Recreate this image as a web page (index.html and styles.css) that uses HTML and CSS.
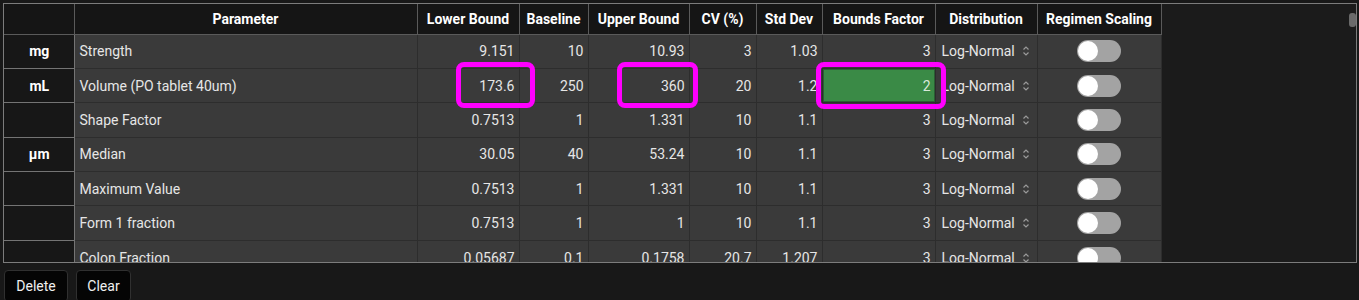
FILE: index.html
```html
<!DOCTYPE html>
<html>
<head>
<meta charset="utf-8">
<link rel="stylesheet" href="styles.css">
</head>
<body>
<div class="page">
  <div class="grid-box">
    <table class="grid">
      <colgroup>
        <col class="c-unit"><col class="c-param"><col class="c-lower"><col class="c-base"><col class="c-upper"><col class="c-cv"><col class="c-std"><col class="c-bf"><col class="c-dist"><col class="c-reg">
      </colgroup>
      <thead>
        <tr>
          <th class="unit"></th>
          <th>Parameter</th>
          <th>Lower Bound</th>
          <th>Baseline</th>
          <th>Upper Bound</th>
          <th>CV (%)</th>
          <th>Std Dev</th>
          <th>Bounds Factor</th>
          <th>Distribution</th>
          <th>Regimen Scaling</th>
        </tr>
      </thead>
      <tbody>
        <tr>
          <td class="unit">mg</td><td class="name">Strength</td><td class="num">9.151</td><td class="num">10</td><td class="num">10.93</td><td class="num">3</td><td class="num">1.03</td><td class="num">3</td>
          <td class="dist"><span class="sel">Log-Normal<svg class="arr" viewBox="0 0 8 12" width="8" height="12"><path d="M1.5 4.5 L4 2 L6.5 4.5 M1.5 7.5 L4 10 L6.5 7.5" fill="none" stroke="#9a9a9a" stroke-width="1.2"/></svg></span></td>
          <td class="reg"><span class="toggle"><span class="knob"></span></span></td>
        </tr>
        <tr>
          <td class="unit">mL</td><td class="name">Volume (PO tablet 40um)</td><td class="num mark"><span class="ring r-lower"></span>173.6</td><td class="num">250</td><td class="num mark"><span class="ring r-upper"></span>360</td><td class="num">20</td><td class="num">1.2</td><td class="num green mark"><span class="ring r-bf"></span>2</td>
          <td class="dist"><span class="sel">Log-Normal<svg class="arr" viewBox="0 0 8 12" width="8" height="12"><path d="M1.5 4.5 L4 2 L6.5 4.5 M1.5 7.5 L4 10 L6.5 7.5" fill="none" stroke="#9a9a9a" stroke-width="1.2"/></svg></span></td>
          <td class="reg"><span class="toggle"><span class="knob"></span></span></td>
        </tr>
        <tr>
          <td class="unit"></td><td class="name">Shape Factor</td><td class="num">0.7513</td><td class="num">1</td><td class="num">1.331</td><td class="num">10</td><td class="num">1.1</td><td class="num">3</td>
          <td class="dist"><span class="sel">Log-Normal<svg class="arr" viewBox="0 0 8 12" width="8" height="12"><path d="M1.5 4.5 L4 2 L6.5 4.5 M1.5 7.5 L4 10 L6.5 7.5" fill="none" stroke="#9a9a9a" stroke-width="1.2"/></svg></span></td>
          <td class="reg"><span class="toggle"><span class="knob"></span></span></td>
        </tr>
        <tr>
          <td class="unit">µm</td><td class="name">Median</td><td class="num">30.05</td><td class="num">40</td><td class="num">53.24</td><td class="num">10</td><td class="num">1.1</td><td class="num">3</td>
          <td class="dist"><span class="sel">Log-Normal<svg class="arr" viewBox="0 0 8 12" width="8" height="12"><path d="M1.5 4.5 L4 2 L6.5 4.5 M1.5 7.5 L4 10 L6.5 7.5" fill="none" stroke="#9a9a9a" stroke-width="1.2"/></svg></span></td>
          <td class="reg"><span class="toggle"><span class="knob"></span></span></td>
        </tr>
        <tr>
          <td class="unit"></td><td class="name">Maximum Value</td><td class="num">0.7513</td><td class="num">1</td><td class="num">1.331</td><td class="num">10</td><td class="num">1.1</td><td class="num">3</td>
          <td class="dist"><span class="sel">Log-Normal<svg class="arr" viewBox="0 0 8 12" width="8" height="12"><path d="M1.5 4.5 L4 2 L6.5 4.5 M1.5 7.5 L4 10 L6.5 7.5" fill="none" stroke="#9a9a9a" stroke-width="1.2"/></svg></span></td>
          <td class="reg"><span class="toggle"><span class="knob"></span></span></td>
        </tr>
        <tr>
          <td class="unit"></td><td class="name">Form 1 fraction</td><td class="num">0.7513</td><td class="num">1</td><td class="num">1</td><td class="num">10</td><td class="num">1.1</td><td class="num">3</td>
          <td class="dist"><span class="sel">Log-Normal<svg class="arr" viewBox="0 0 8 12" width="8" height="12"><path d="M1.5 4.5 L4 2 L6.5 4.5 M1.5 7.5 L4 10 L6.5 7.5" fill="none" stroke="#9a9a9a" stroke-width="1.2"/></svg></span></td>
          <td class="reg"><span class="toggle"><span class="knob"></span></span></td>
        </tr>
        <tr>
          <td class="unit"></td><td class="name">Colon Fraction</td><td class="num">0.05687</td><td class="num">0.1</td><td class="num">0.1758</td><td class="num">20.7</td><td class="num">1.207</td><td class="num">3</td>
          <td class="dist"><span class="sel">Log-Normal<svg class="arr" viewBox="0 0 8 12" width="8" height="12"><path d="M1.5 4.5 L4 2 L6.5 4.5 M1.5 7.5 L4 10 L6.5 7.5" fill="none" stroke="#9a9a9a" stroke-width="1.2"/></svg></span></td>
          <td class="reg"><span class="toggle"><span class="knob"></span></span></td>
        </tr>
      </tbody>
    </table>
    <span class="thumb"></span>
  </div>
  <div class="actions">
    <button class="btn btn-delete">Delete</button>
    <button class="btn btn-clear">Clear</button>
  </div>
</div>
</body>
</html>
```

FILE: styles.css
```css
* { box-sizing: border-box; }
html, body {
  margin: 0;
  padding: 0;
  background: #181818;
  font-family: Roboto, "Liberation Sans", sans-serif;
  font-size: 14px;
  color: #e6e6e6;
}
.page {
  padding: 3px 2px 0 3px;
  background: #181818;
  height: 300px;
  overflow: hidden;
}
.grid-box {
  position: relative;
  height: 260px;
  border: 1px solid #7c7c7c;
  background: #1b1b1b;
  overflow: hidden;
}
.grid {
  border-collapse: collapse;
  table-layout: fixed;
  width: 1157px;
}
.c-unit { width: 70px; }
.c-param { width: 343px; }
.c-lower { width: 102px; }
.c-base { width: 69px; }
.c-upper { width: 101px; }
.c-cv { width: 67px; }
.c-std { width: 66px; }
.c-bf { width: 113px; }
.c-dist { width: 102px; }
.c-reg { width: 124px; }

.grid th {
  height: 30px;
  background: #151515;
  color: #ffffff;
  font-weight: 700;
  font-size: 14px;
  text-align: center;
  border: 1px solid #5a5a5a;
  border-top: none;
  padding: 0 2px;
  white-space: nowrap;
}
.grid th:first-child { border-left: none; }
.grid td {
  height: 34.4px;
  background: #3a3a3a;
  border: 1px solid #2d2d2d;
  padding: 0 4px 0 5px;
  white-space: nowrap;
}
.grid td.unit {
  background: #171717;
  border: 1px solid #747474;
  border-left: none;
  text-align: center;
  font-weight: 700;
  color: #ffffff;
}
.grid td.num { text-align: right; }
.grid td.mark { position: relative; }
.grid td.green {
  background: #3a8a46;
  color: #d8e8da;
  box-shadow: inset 0 0 0 1px #2a5e33;
}
.ring {
  position: absolute;
  border: 5px solid #ff00ff;
  border-radius: 8px;
  pointer-events: none;
}
.r-lower { left: 38px; top: -7px; width: 79px; height: 46px; }
.r-upper { left: 28px; top: -7px; width: 81px; height: 46px; }
.r-bf { left: -7px; top: -7px; width: 130px; height: 47px; }

.grid td.dist { padding: 0 0 0 6px; }
.sel {
  display: flex;
  align-items: center;
  justify-content: space-between;
  padding-right: 7px;
}
.arr { display: block; }
.grid td.reg { text-align: center; padding: 0; }
.toggle {
  display: inline-flex;
  align-items: center;
  vertical-align: middle;
  width: 44px;
  height: 22px;
  border-radius: 11px;
  background: #a3a3a3;
  padding: 1px;
}
.knob {
  width: 20px;
  height: 20px;
  border-radius: 50%;
  background: #ffffff;
}
.thumb {
  position: absolute;
  right: 0;
  top: 9px;
  width: 7px;
  height: 14px;
  border-radius: 3px;
  background: #6a6a6a;
}
.actions {
  display: flex;
  gap: 8px;
  padding: 7px 0 0 1px;
}
.btn {
  height: 32px;
  background: #050505;
  color: #f0f0f0;
  border: 1px solid #303030;
  border-radius: 4px;
  font-family: Roboto, "Liberation Sans", sans-serif;
  font-size: 14px;
  padding: 0 8px 0;
}
.btn-delete { width: 64px; }
.btn-clear { width: 55px; }
```
